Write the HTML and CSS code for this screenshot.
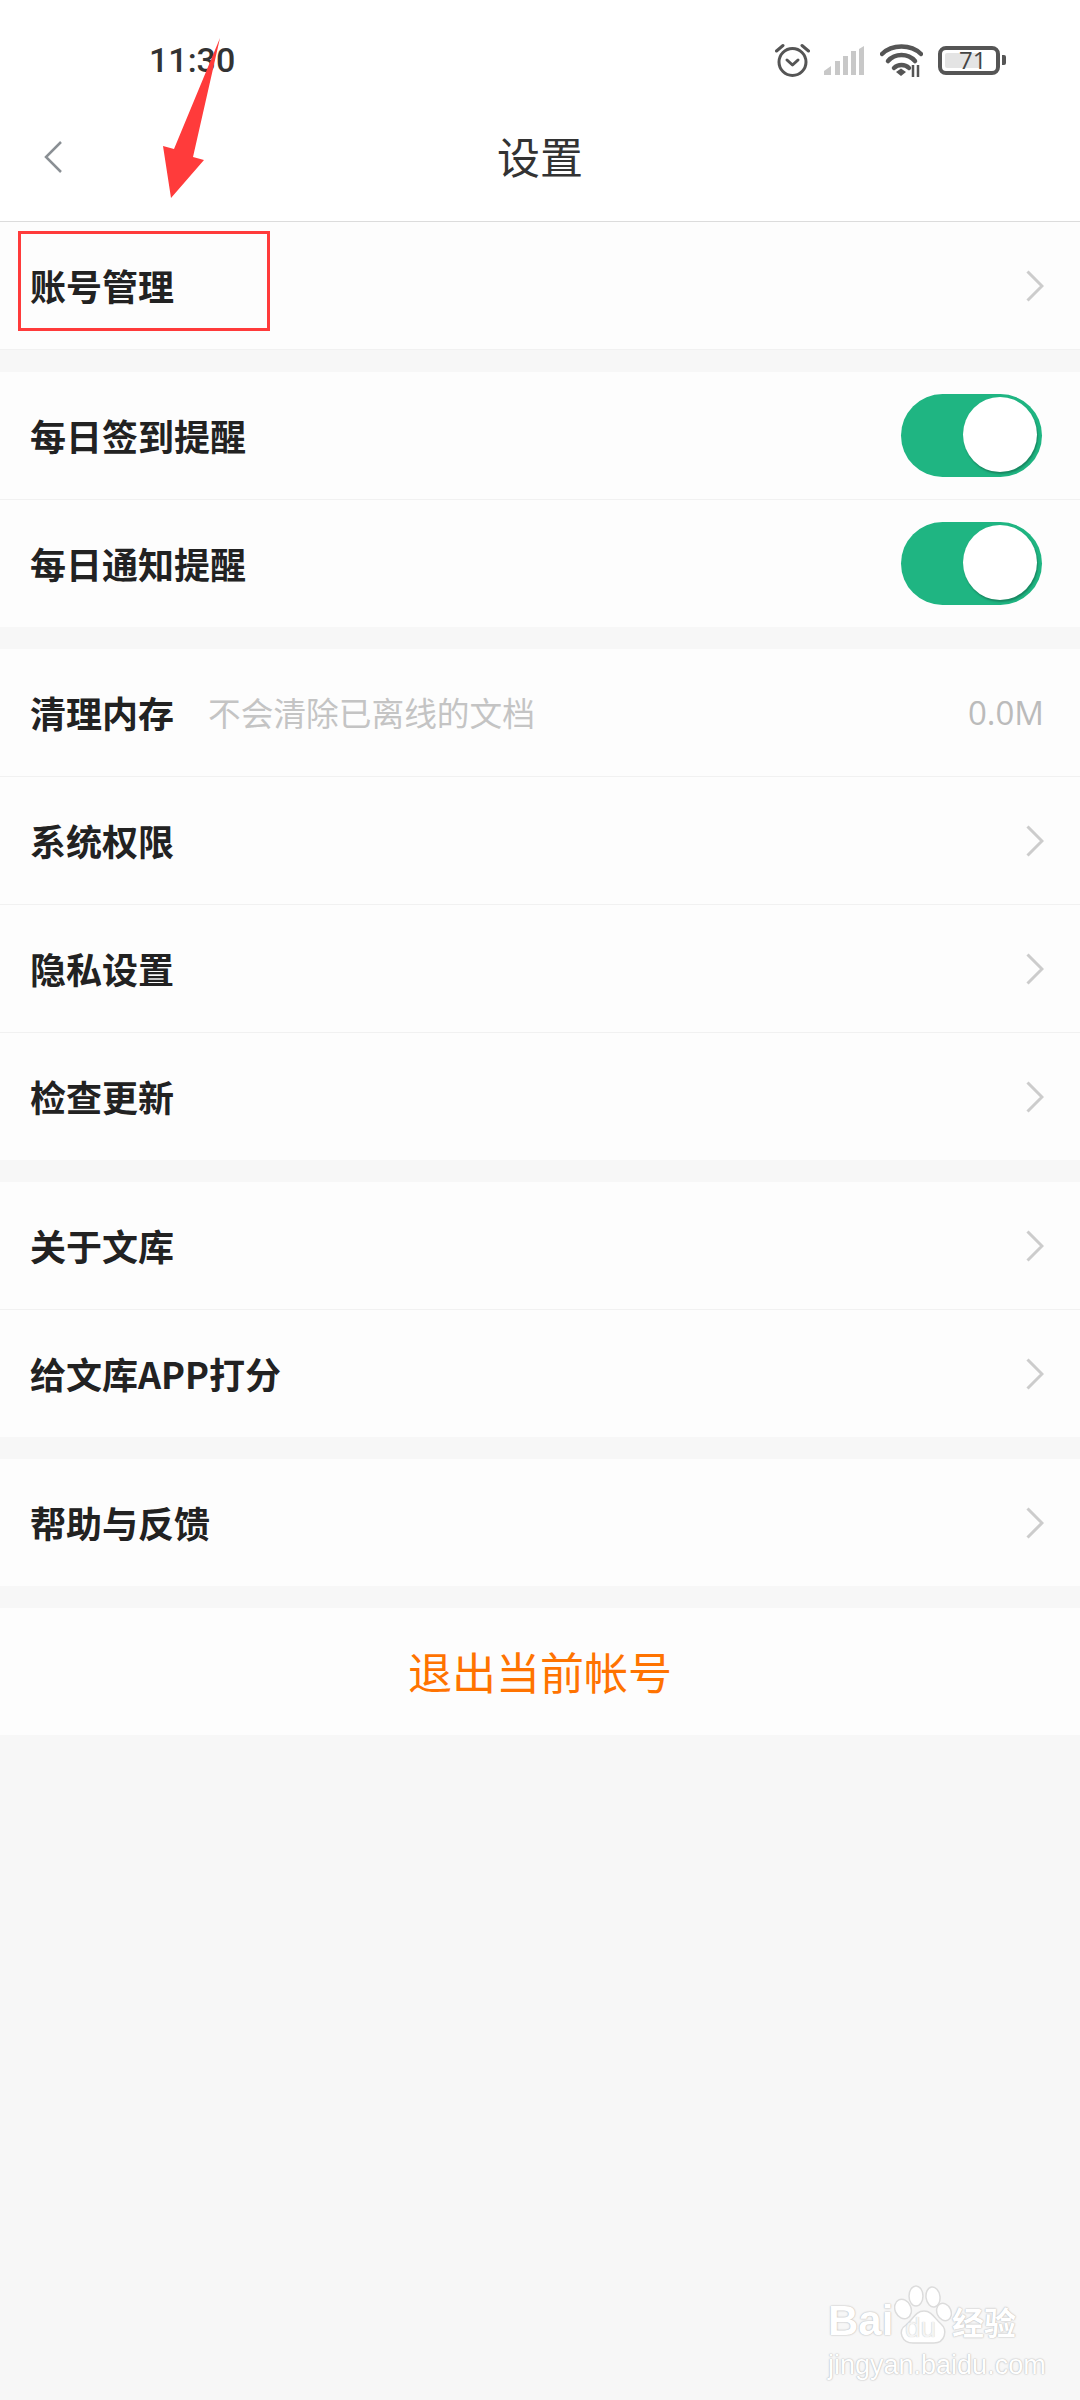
FILE: index.html
```html
<!DOCTYPE html>
<html lang="zh-CN">

<head>
    <meta charset="UTF-8" />
    <title>设置</title>
    <link rel="stylesheet" href="styles.css">
</head>

<body>
    <header class="top">
        <div class="status">
            <span class="time">11:30</span>
            <div class="status-icons">
                <svg class="ico-clock" viewBox="0 0 35 34" fill="none" stroke="#555" stroke-width="3" stroke-linecap="round" stroke-linejoin="round">
                    <circle cx="17.5" cy="19" r="13.5" />
                    <path d="M12 17l5.500 5 5.500-5" />
                    <path d="M1.500 8L8 2.500M33.500 8L27 2.500" />
                </svg>
                <svg class="ico-signal" viewBox="0 0 40 29" fill="#c8c8c8">
                    <path d="M0 29v-4l7-5v9z" />
                    <rect x="11" y="15" width="5" height="14" />
                    <rect x="19" y="10" width="5" height="19" />
                    <rect x="27" y="5" width="5" height="24" />
                    <path d="M35 3l5-3v29h-5z" />
                </svg>
                <svg class="ico-wifi" viewBox="0 0 43 33" fill="none" stroke="#555" stroke-width="4.500" stroke-linecap="round">
                    <path d="M2 10C12 0 31 0 41 10" />
                    <path d="M8 17C15 9 28 9 35 17" />
                    <path d="M14 24C18 20 25 20 29 24" />
                    <path d="M16 28l5-3.500 5 3.500-5 4z" fill="#555" stroke="none" />
                    <path d="M33 21v12M38 21v12" stroke-width="2.500" stroke-linecap="butt" />
                </svg>
                <div class="battery">
                    <div class="battery-body">
                        <div class="battery-fill"></div>
                        <span class="battery-num">71</span>
                    </div>
                    <div class="battery-nub"></div>
                </div>
            </div>
        </div>
        <nav class="nav">
            <svg class="nav-back" viewBox="0 0 18 34" fill="none" stroke="#8a8f94" stroke-width="2.500">
                <path d="M17 2L2 17l15 15" />
            </svg>
            <h1 class="nav-title">设置</h1>
        </nav>
    </header>

    <main class="settings">
        <section class="group">
            <div class="row">
                <span class="row-label">账号管理</span>
                <svg class="chevron" viewBox="0 0 18 32" fill="none" stroke="#ccc" stroke-width="3"><path d="M1.500 1.500L16 16 1.500 30.500" /></svg>
            </div>
        </section>

        <section class="group">
            <div class="row">
                <span class="row-label">每日签到提醒</span>
                <div class="toggle"><div class="knob"></div></div>
            </div>
            <div class="row">
                <span class="row-label">每日通知提醒</span>
                <div class="toggle"><div class="knob"></div></div>
            </div>
        </section>

        <section class="group">
            <div class="row">
                <span class="row-label">清理内存</span>
                <span class="row-hint">不会清除已离线的文档</span>
                <span class="row-value">0.0M</span>
            </div>
            <div class="row">
                <span class="row-label">系统权限</span>
                <svg class="chevron" viewBox="0 0 18 32" fill="none" stroke="#ccc" stroke-width="3"><path d="M1.500 1.500L16 16 1.500 30.500" /></svg>
            </div>
            <div class="row">
                <span class="row-label">隐私设置</span>
                <svg class="chevron" viewBox="0 0 18 32" fill="none" stroke="#ccc" stroke-width="3"><path d="M1.500 1.500L16 16 1.500 30.500" /></svg>
            </div>
            <div class="row">
                <span class="row-label">检查更新</span>
                <svg class="chevron" viewBox="0 0 18 32" fill="none" stroke="#ccc" stroke-width="3"><path d="M1.500 1.500L16 16 1.500 30.500" /></svg>
            </div>
        </section>

        <section class="group">
            <div class="row">
                <span class="row-label">关于文库</span>
                <svg class="chevron" viewBox="0 0 18 32" fill="none" stroke="#ccc" stroke-width="3"><path d="M1.500 1.500L16 16 1.500 30.500" /></svg>
            </div>
            <div class="row">
                <span class="row-label">给文库APP打分</span>
                <svg class="chevron" viewBox="0 0 18 32" fill="none" stroke="#ccc" stroke-width="3"><path d="M1.500 1.500L16 16 1.500 30.500" /></svg>
            </div>
        </section>

        <section class="group">
            <div class="row">
                <span class="row-label">帮助与反馈</span>
                <svg class="chevron" viewBox="0 0 18 32" fill="none" stroke="#ccc" stroke-width="3"><path d="M1.500 1.500L16 16 1.500 30.500" /></svg>
            </div>
        </section>

        <section class="group">
            <div class="row row-logout"><span class="logout-text">退出当前帐号</span></div>
        </section>
    </main>

    <!-- red marks drawn over the screenshot -->
    <div class="mark-box"></div>
    <svg class="mark-arrow" viewBox="0 0 1080 240">
        <path d="M220 38L193 157 204 160 171 198 163 146 174 149z" fill="#ff3b3b" />
    </svg>

    <div class="watermark">
        <div class="wm-top">
            <span class="wm-bai">Bai</span>
            <div class="wm-paw">
                <svg viewBox="0 0 58 60" fill="#fff" stroke="#dcdcdc" stroke-width="1.500">
                    <ellipse cx="9" cy="24" rx="8" ry="10" transform="rotate(-25 9 24)" />
                    <ellipse cx="22" cy="11" rx="7" ry="10" />
                    <ellipse cx="39" cy="12" rx="7" ry="10" transform="rotate(-8 39 12)" />
                    <ellipse cx="50" cy="27" rx="7" ry="9" transform="rotate(-25 50 27)" />
                    <path d="M30 26c8 0 11 8 17 13 7 6 4 19-7 19H19C8 58 3 46 12 40c7-5 9-14 18-14z" />
                </svg>
                <span class="wm-du">du</span>
            </div>
            <span class="wm-cn">经验</span>
        </div>
        <div class="wm-url">jingyan.baidu.com</div>
    </div>
</body>

</html>
```

FILE: styles.css
```css
html, body {
    margin: 0;
    padding: 0;
}

body {
    width: 1080px;
    height: 2400px;
    overflow: hidden;
    position: relative;
    background: #f7f7f7;
    font-family: "Noto Sans CJK SC", "Noto Sans", sans-serif;
    color: #222;
}

.top {
    background: #fff;
    border-bottom: 1px solid #dcdcdc;
}

.status {
    height: 94px;
    box-sizing: border-box;
    padding: 26px 74px 0 149px;
    display: flex;
    align-items: center;
    justify-content: space-between;
}

.time {
    font-family: Roboto, sans-serif;
    font-weight: 500;
    font-size: 34px;
    color: #333;
}

.status-icons {
    display: flex;
    align-items: center;
}

.ico-clock {
    width: 35px;
    height: 34px;
    margin-right: 14px;
}

.ico-signal {
    width: 40px;
    height: 29px;
    margin-right: 16px;
}

.ico-wifi {
    width: 43px;
    height: 33px;
    margin-right: 15px;
}

.battery {
    display: flex;
    align-items: center;
    gap: 2px;
}

.battery-body {
    width: 62px;
    height: 29px;
    box-sizing: border-box;
    border: 4px solid #555;
    border-radius: 8px;
    padding: 3px;
    position: relative;
}

.battery-fill {
    width: 36px;
    height: 100%;
    background: #e4e4e4;
    border-radius: 2px;
}

.battery-num {
    position: absolute;
    left: 17px;
    top: -6px;
    font-family: "Open Sans", sans-serif;
    font-size: 24px;
    line-height: 32px;
    color: #444;
}

.battery-nub {
    width: 4px;
    height: 10px;
    background: #555;
    border-radius: 0 2px 2px 0;
}

.nav {
    height: 127px;
    display: flex;
    align-items: center;
    justify-content: center;
    position: relative;
}

.nav-back {
    position: absolute;
    left: 44px;
    top: 46px;
    width: 18px;
    height: 34px;
}

.nav-title {
    margin: 0 0 6px;
    font-size: 43px;
    font-weight: 400;
    color: #333;
}

.group {
    margin-bottom: 22px;
}

.row {
    height: 127px;
    display: flex;
    align-items: center;
    padding: 0 36px 0 30px;
    background: #fdfdfd;
    border-bottom: 1px solid #f1f1f1;
}

.row:last-child {
    border-bottom: 0;
}

/* the first group keeps its hairline above the gap */
.group:first-child .row {
    border-bottom: 1px solid #f1f1f1;
}

.row-label {
    margin-bottom: 2px;
    font-size: 36px;
    font-weight: 700;
    color: #222;
}

.row-hint {
    margin-left: 34px;
    margin-bottom: 2px;
    font-size: 32.700px;
    color: #c4c4c4;
}

.row-value {
    margin-left: auto;
    font-family: "Open Sans", sans-serif;
    font-size: 33px;
    color: #bbb;
}

.chevron {
    margin-left: auto;
    width: 18px;
    height: 32px;
}

.toggle {
    margin-left: auto;
    margin-right: 2px;
    width: 141px;
    height: 83px;
    border-radius: 42px;
    background: #1fb582;
    position: relative;
}

.knob {
    position: absolute;
    right: 5px;
    top: 3px;
    width: 74px;
    height: 75px;
    border-radius: 50%;
    background: #fff;
    box-shadow: 1px 2px 2px #17855f;
}

.row-logout {
    justify-content: center;
    padding: 0;
}

.logout-text {
    margin-bottom: 2px;
    font-size: 44px;
    color: #ff7300;
}

.mark-box {
    position: absolute;
    left: 18px;
    top: 231px;
    width: 252px;
    height: 100px;
    box-sizing: border-box;
    border: 3px solid #ff3b3b;
}

.mark-arrow {
    position: absolute;
    left: 0;
    top: 0;
    width: 1080px;
    height: 240px;
}

.watermark {
    position: absolute;
    left: 828px;
    top: 2285px;
    width: 194px;
    color: #fff;
    text-shadow: 0 0 2px #bbb, 0 0 1px #bbb;
}

.wm-top {
    display: flex;
    align-items: flex-end;
    height: 60px;
}

.wm-bai {
    width: 66px;
    font-family: "Liberation Sans", sans-serif;
    font-weight: 700;
    font-size: 42px;
    line-height: 48px;
}

.wm-paw {
    width: 58px;
    height: 60px;
    position: relative;
}

.wm-paw svg {
    display: block;
    width: 58px;
    height: 60px;
}

.wm-du {
    position: absolute;
    left: 11px;
    top: 28px;
    font-family: "Liberation Sans", sans-serif;
    font-size: 28px;
    line-height: 30px;
    color: #f4f4f4;
    text-shadow: 0 0 1px #bbb;
}

.wm-cn {
    font-size: 32px;
    font-weight: 700;
    line-height: 48px;
}

.wm-url {
    margin-top: 6px;
    font-family: "Liberation Sans", sans-serif;
    font-size: 27px;
    line-height: 28px;
    white-space: nowrap;
}
```
